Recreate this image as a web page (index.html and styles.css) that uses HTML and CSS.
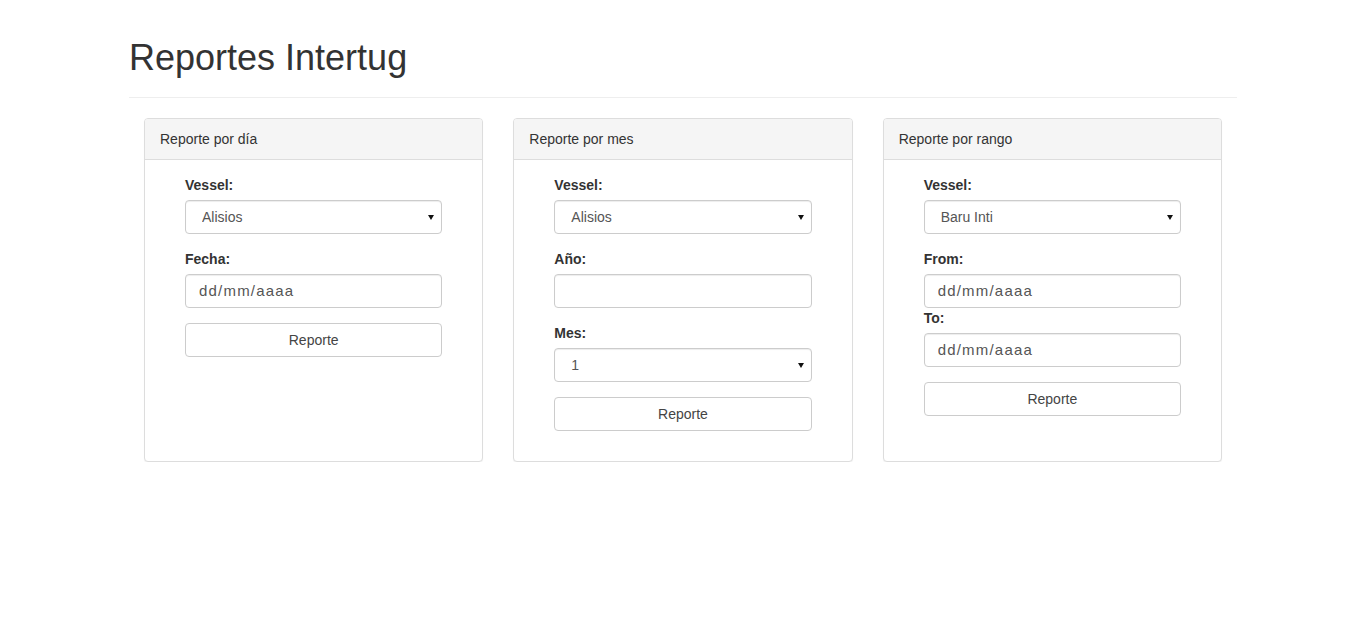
FILE: index.html
```html
<!DOCTYPE html>
<html lang="es">
<head>
<meta charset="utf-8">
<title>Reportes Intertug</title>
<link rel="stylesheet" href="styles.css">
</head>
<body>
<div class="page">
  <div class="page-header">
    <h1>Reportes Intertug</h1>
  </div>
  <div class="row">
    <div class="panel">
      <div class="panel-heading">Reporte por día</div>
      <div class="panel-body">
        <form class="form">
          <div class="form-group">
            <label>Vessel:</label>
            <span class="select-wrap"><select class="form-control"><option>Alisios</option></select></span>
          </div>
          <div class="form-group">
            <label>Fecha:</label>
            <input class="form-control date" type="text" placeholder="dd/mm/aaaa">
          </div>
          <div class="form-group">
            <button type="button" class="btn">Reporte</button>
          </div>
        </form>
      </div>
    </div>
    <div class="panel">
      <div class="panel-heading">Reporte por mes</div>
      <div class="panel-body">
        <form class="form">
          <div class="form-group">
            <label>Vessel:</label>
            <span class="select-wrap"><select class="form-control"><option>Alisios</option></select></span>
          </div>
          <div class="form-group">
            <label>Año:</label>
            <input class="form-control" type="text">
          </div>
          <div class="form-group">
            <label>Mes:</label>
            <span class="select-wrap"><select class="form-control"><option>1</option></select></span>
          </div>
          <div class="form-group">
            <button type="button" class="btn">Reporte</button>
          </div>
        </form>
      </div>
    </div>
    <div class="panel">
      <div class="panel-heading">Reporte por rango</div>
      <div class="panel-body">
        <form class="form">
          <div class="form-group">
            <label>Vessel:</label>
            <span class="select-wrap"><select class="form-control"><option>Baru Inti</option></select></span>
          </div>
          <div class="form-group">
            <label>From:</label>
            <input class="form-control date" type="text" placeholder="dd/mm/aaaa">
            <label>To:</label>
            <input class="form-control date" type="text" placeholder="dd/mm/aaaa">
          </div>
          <div class="form-group">
            <button type="button" class="btn">Reporte</button>
          </div>
        </form>
      </div>
    </div>
  </div>
</div>
</body>
</html>
```
FILE: styles.css
```css
* { box-sizing: border-box; }
html, body { margin: 0; padding: 0; background: #fff; }
body {
  font-family: "Liberation Sans", Arial, sans-serif;
  font-size: 14px;
  line-height: 20px;
  color: #333;
}
.page {
  width: 1108px;
  margin-left: 129px;
}
.page-header {
  padding-top: 38px;
  padding-bottom: 9px;
  border-bottom: 1px solid #eee;
  margin-bottom: 20px;
}
.page-header h1 {
  margin: 0 0 10px 0;
  font-size: 36px;
  font-weight: 500;
  line-height: 1.1;
  color: #333;
}
.row {
  display: grid;
  grid-template-columns: 1fr 1fr 1fr;
  column-gap: 30px;
  padding: 0 15px;
}
.panel {
  border: 1px solid #ddd;
  border-radius: 4px;
  background: #fff;
  box-shadow: 0 1px 1px rgba(0,0,0,.05);
}
.panel-heading {
  background: #f5f5f5;
  border-bottom: 1px solid #ddd;
  border-radius: 3px 3px 0 0;
  padding: 10px 15px;
  color: #333;
}
.panel-body {
  padding: 15px;
}
.form {
  margin: 0 25px 0 25px;
}
.form-group {
  margin-bottom: 15px;
}
label {
  display: block;
  font-weight: bold;
  margin-bottom: 5px;
}
.form-control {
  display: block;
  width: 100%;
  height: 34px;
  padding: 6px 12px;
  font-family: inherit;
  font-size: 14px;
  line-height: 20px;
  color: #555;
  background: #fff;
  border: 1px solid #ccc;
  border-radius: 4px;
  box-shadow: inset 0 1px 1px rgba(0,0,0,.075);
  margin: 0;
}
.form-control.date {
  padding-left: 13px;
  font-size: 15px;
  letter-spacing: 1.2px;
}
input.form-control::placeholder { color: #555; opacity: 1; }
select.form-control {
  -webkit-appearance: none;
  appearance: none;
  padding-left: 16px;
}
.select-wrap {
  display: block;
  position: relative;
}
.select-wrap::after {
  content: "";
  position: absolute;
  right: 8px;
  top: 15px;
  border-left: 3.5px solid transparent;
  border-right: 3.5px solid transparent;
  border-top: 5px solid #111;
  pointer-events: none;
}
.btn {
  display: block;
  width: 100%;
  height: 34px;
  padding: 6px 12px;
  font-family: inherit;
  font-size: 14px;
  line-height: 20px;
  color: #444;
  background: #fff;
  border: 1px solid #ccc;
  border-radius: 4px;
  text-align: center;
}
```
